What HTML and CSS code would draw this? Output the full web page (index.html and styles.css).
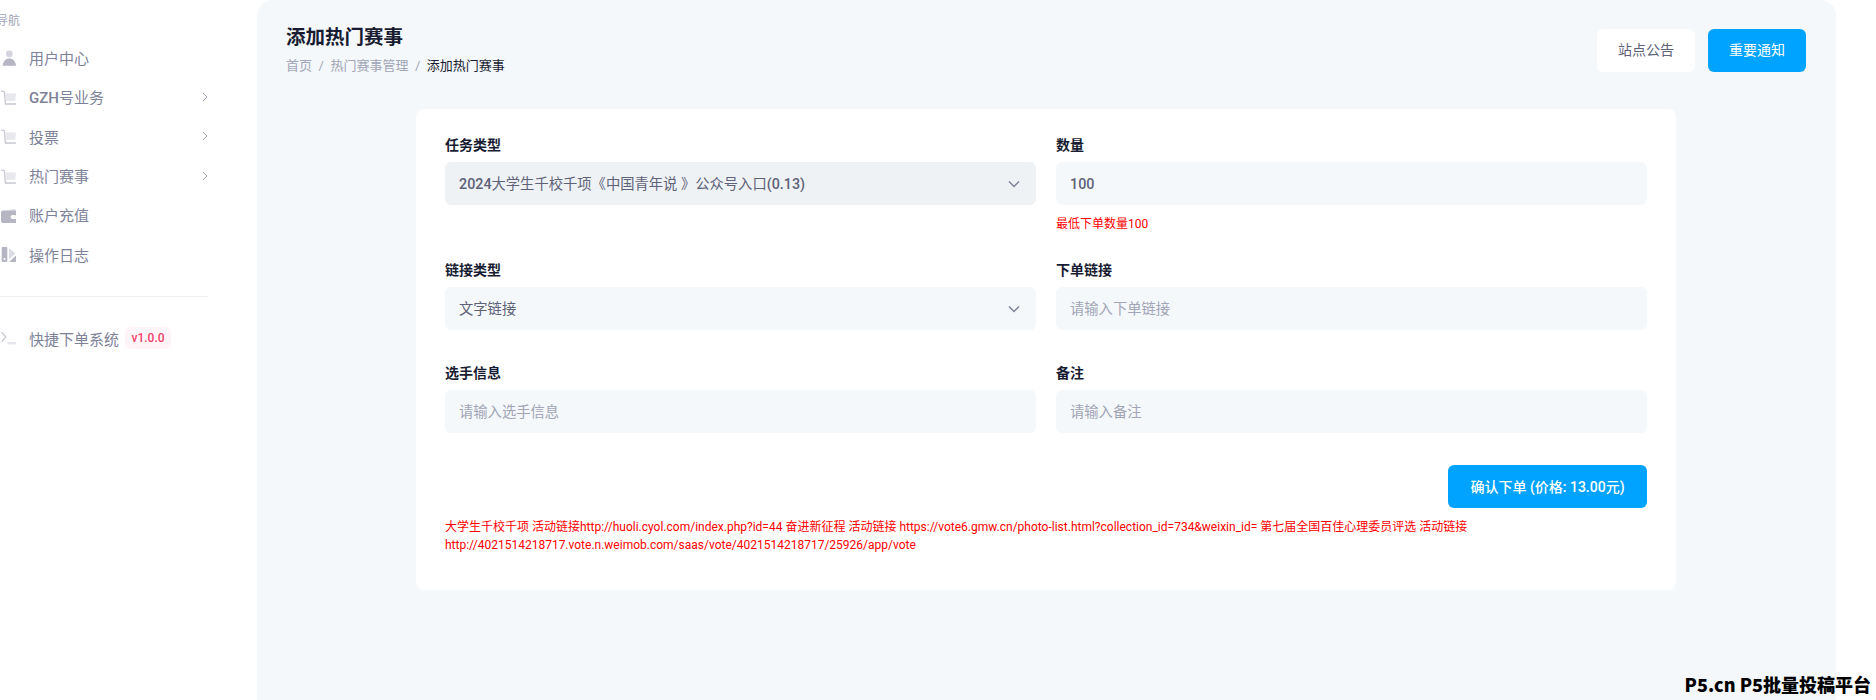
FILE: index.html
```html
<!DOCTYPE html>
<html>
<head>
    <title>添加热门赛事</title>
    <link rel="stylesheet" href="styles.css">
</head>
<body>
    <div class="layout">
        <aside class="sidebar">
            <div class="nav-title">导航</div>
            <a class="nav-item">
                <svg class="nav-icon" viewBox="0 0 16 16"><circle cx="9.300" cy="3.800" r="3.400" fill="#d5d5e0"/><path d="M2.700 15.800c.3-4.500 3-7.200 6.600-7.200s6.400 2.700 6.700 7.200z" fill="#b5b5c3"/></svg>
                <span class="nav-text">用户中心</span>
            </a>
            <a class="nav-item">
                <svg class="nav-icon" viewBox="0 0 16 16"><path d="M5.500 4.500h10.500l-.8 7.500H6.300z" fill="#e8e8ef"/><path d="M1 1.800l3.400.9 1 12.300H16" fill="none" stroke="#c8c8d4" stroke-width="1.300"/></svg>
                <span class="nav-text"><span class="latin">GZH</span>号业务</span>
                <svg class="nav-arrow" viewBox="0 0 6 10"><path d="M1 1l4 4-4 4" fill="none" stroke="#a1a5b7" stroke-width="1"/></svg>
            </a>
            <a class="nav-item">
                <svg class="nav-icon" viewBox="0 0 16 16"><path d="M5.500 4.500h10.500l-.8 7.500H6.300z" fill="#e8e8ef"/><path d="M1 1.800l3.400.9 1 12.300H16" fill="none" stroke="#c8c8d4" stroke-width="1.300"/></svg>
                <span class="nav-text">投票</span>
                <svg class="nav-arrow" viewBox="0 0 6 10"><path d="M1 1l4 4-4 4" fill="none" stroke="#a1a5b7" stroke-width="1"/></svg>
            </a>
            <a class="nav-item">
                <svg class="nav-icon" viewBox="0 0 16 16"><path d="M5.500 4.500h10.500l-.8 7.500H6.300z" fill="#e8e8ef"/><path d="M1 1.800l3.400.9 1 12.300H16" fill="none" stroke="#c8c8d4" stroke-width="1.300"/></svg>
                <span class="nav-text">热门赛事</span>
                <svg class="nav-arrow" viewBox="0 0 6 10"><path d="M1 1l4 4-4 4" fill="none" stroke="#a1a5b7" stroke-width="1"/></svg>
            </a>
            <a class="nav-item">
                <svg class="nav-icon" viewBox="0 0 16 16"><path d="M6 3.500l8.500-1.800 1.500 1.800z" fill="#dcdce5"/><path d="M1 5.500a2 2 0 0 1 2-2h13v12.500H3a2 2 0 0 1-2-2z" fill="#b5b5c3"/><rect x="10.500" y="8" width="6" height="4" rx="2" fill="#fff"/></svg>
                <span class="nav-text">账户充值</span>
            </a>
            <a class="nav-item">
                <svg class="nav-icon" viewBox="0 0 16 16"><rect x="1.700" y="1" width="5.600" height="15" rx="1" fill="#b5b5c3"/><circle cx="4.500" cy="13" r="1" fill="#fff"/><path d="M9 2l6.500 5.500L9 13.500z" fill="#dcdce5"/><path d="M9 16l7-6.500V16z" fill="#b5b5c3"/></svg>
                <span class="nav-text">操作日志</span>
            </a>
            <div class="nav-divider"></div>
            <a class="nav-item nav-version">
                <svg class="nav-icon" viewBox="0 0 16 16"><path d="M1.800 2.200l4 4.800-4 4.800" fill="none" stroke="#c4c4d0" stroke-width="1.200"/><rect x="7.500" y="12" width="8.500" height="2.400" fill="#e4e4ec"/></svg>
                <span class="nav-text">快捷下单系统</span>
                <span class="badge">v1.0.0</span>
            </a>
        </aside>

        <main class="main">
            <div class="page-header">
                <div>
                    <h1>添加热门赛事</h1>
                    <div class="breadcrumb">
                        <span>首页</span>
                        <span class="sep">/</span>
                        <span>热门赛事管理</span>
                        <span class="sep">/</span>
                        <span class="current">添加热门赛事</span>
                    </div>
                </div>
                <div class="header-actions">
                    <button class="btn btn-white">站点公告</button>
                    <button class="btn btn-primary">重要通知</button>
                </div>
            </div>

            <div class="card">
                <div class="form-grid">
                    <div class="field has-hint">
                        <label>任务类型</label>
                        <div class="control select active">
                            <span><span class="latin">2024</span>大学生千校千项《中国青年说 》公众号入口<span class="latin">(0.13)</span></span>
                            <svg class="select-arrow" viewBox="0 0 12 8"><path d="M1 1.500l5 5 5-5" fill="none" stroke="#7e8299" stroke-width="1.500"/></svg>
                        </div>
                    </div>
                    <div class="field has-hint">
                        <label>数量</label>
                        <div class="control number"><span class="latin">100</span></div>
                        <div class="hint">最低下单数量100</div>
                    </div>
                    <div class="field">
                        <label>链接类型</label>
                        <div class="control select">
                            <span>文字链接</span>
                            <svg class="select-arrow" viewBox="0 0 12 8"><path d="M1 1.500l5 5 5-5" fill="none" stroke="#7e8299" stroke-width="1.500"/></svg>
                        </div>
                    </div>
                    <div class="field">
                        <label>下单链接</label>
                        <div class="control placeholder">请输入下单链接</div>
                    </div>
                    <div class="field">
                        <label>选手信息</label>
                        <div class="control placeholder">请输入选手信息</div>
                    </div>
                    <div class="field">
                        <label>备注</label>
                        <div class="control placeholder">请输入备注</div>
                    </div>
                </div>
                <div class="form-actions">
                    <button class="btn btn-primary btn-submit">确认下单 (价格: 13.00元)</button>
                </div>
                <p class="notice">大学生千校千项 活动链接http://huoli.cyol.com/index.php?id=44 奋进新征程 活动链接 https://vote6.gmw.cn/photo-list.html?collection_id=734&amp;weixin_id= 第七届全国百佳心理委员评选 活动链接 http://4021514218717.vote.n.weimob.com/saas/vote/4021514218717/25926/app/vote</p>
            </div>
        </main>
    </div>

    <div class="watermark">P5.cn P5批量投稿平台</div>
</body>
</html>
```

FILE: styles.css
```css
* {
    box-sizing: border-box;
}
html, body {
    height: 100%;
}
body {
    margin: 0;
    background-color: white;
    font-family: Roboto, "Noto Sans CJK SC", sans-serif;
    font-size: 14px;
    color: #5e6278;
    overflow: hidden;
}
.latin {
    font-weight: 500;
}
.layout {
    display: flex;
    height: 700px;
}

/* sidebar is scrolled a little to the left in the source */
.sidebar {
    width: 257px;
    flex-shrink: 0;
    padding-top: 13px;
    overflow: hidden;
}
.nav-title {
    margin-left: -4px;
    font-size: 12px;
    line-height: 16px;
    color: #a1a5b7;
    margin-bottom: 9px;
}
.nav-item {
    display: flex;
    align-items: center;
    width: 208px;
    height: 39.3px;
    color: #7e8299;
    font-size: 15px;
}
.nav-icon {
    width: 16px;
    height: 16px;
    flex-shrink: 0;
    margin-right: 13px;
}
.nav-arrow {
    width: 6px;
    height: 10px;
    margin-left: auto;
}
.nav-divider {
    width: 208px;
    height: 1px;
    background-color: #eff2f5;
    margin: 22px 0;
}
.badge {
    margin-left: 6px;
    padding: 0 6.5px;
    height: 22px;
    line-height: 22px;
    border-radius: 6px;
    background-color: #fff5f8;
    color: #f1416c;
    font-size: 12px;
    font-weight: 500;
}

.main {
    width: 1579px;
    flex-shrink: 0;
    background-color: #f5f8fa;
    border-radius: 16px 16px 0 0;
    padding: 26px 30px 0 29px;
}
.page-header {
    display: flex;
    justify-content: space-between;
    align-items: flex-start;
    margin-bottom: 35px;
}
h1 {
    margin: 0 0 8px;
    font-size: 19.5px;
    line-height: 24px;
    font-weight: 600;
    color: #181c32;
}
.breadcrumb {
    display: flex;
    font-size: 13px;
    line-height: 16px;
    color: #a1a5b7;
}
.breadcrumb .sep {
    padding: 0 6.5px;
}
.breadcrumb .current {
    color: #181c32;
}
.header-actions {
    display: flex;
    gap: 13px;
    margin-top: 3px;
}
.btn {
    height: 43px;
    width: 98px;
    padding: 0 0 3px;
    border: none;
    border-radius: 6px;
    font-family: inherit;
    font-size: 14px;
    cursor: pointer;
}
.btn-white {
    background-color: white;
    color: #5e6278;
}
.btn-primary {
    background-color: #00a3ff;
    color: white;
}
.btn-submit {
    width: 199px;
    padding-bottom: 2px;
    font-weight: 500;
}

.card {
    width: 1260px;
    margin: 0 auto;
    padding: 28px 29px 36px;
    background-color: white;
    border-radius: 8px;
}
.form-grid {
    display: grid;
    grid-template-columns: 1fr 1fr;
    column-gap: 20px;
    row-gap: 3px;
}
.field {
    padding-bottom: 32px;
}
.field.has-hint {
    padding-bottom: 28px;
}
label {
    display: block;
    font-size: 14px;
    line-height: 16px;
    font-weight: 600;
    color: #181c32;
    margin-bottom: 9px;
}
.control {
    display: flex;
    align-items: center;
    justify-content: space-between;
    height: 43px;
    padding: 0 14px 3px;
    background-color: #f5f8fa;
    border-radius: 6px;
    font-size: 14.3px;
}
.control.number {
    padding-bottom: 0;
}
.control.select {
    padding-right: 16px;
}
.control.select.active {
    background-color: #eff2f5;
}
.control.placeholder {
    color: #a1a5b7;
}
.select-arrow {
    width: 12px;
    height: 8px;
    margin-top: 3px;
}
.hint {
    margin-top: 12px;
    font-size: 12px;
    line-height: 14px;
    color: #ff0000;
}
.form-actions {
    display: flex;
    justify-content: flex-end;
}
.notice {
    margin: 10px 0 0;
    font-size: 12px;
    line-height: 18px;
    color: #ff0000;
}

.watermark {
    position: absolute;
    right: 5px;
    bottom: 4px;
    font-family: "Noto Sans CJK SC", sans-serif;
    font-size: 18px;
    line-height: 24px;
    font-weight: 900;
    color: black;
}
```
